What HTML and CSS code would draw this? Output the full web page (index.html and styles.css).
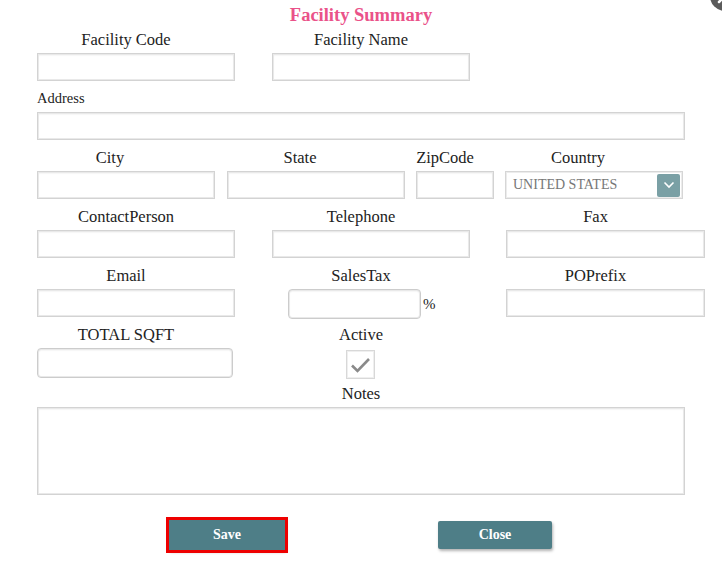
FILE: index.html
```html
<!DOCTYPE html>
<html>
<head>
<meta charset="utf-8">
<link rel="stylesheet" href="styles.css">
</head>
<body>
<div class="dialog">
  <span class="close-x" aria-hidden="true"><svg width="30" height="30" viewBox="0 0 30 30"><circle cx="15" cy="15" r="15" fill="#5b5b5b"/><path d="M9 21 L21 9 M9 9 L21 21" stroke="#fff" stroke-width="2.5" stroke-linecap="round"/></svg></span>
  <h1 class="title">Facility Summary</h1>
  <div class="form">
    <div class="row grid3 first">
      <div class="field"><label class="lbl">Facility Code</label><input class="inp" type="text"></div>
      <div class="field"><label class="lbl">Facility Name</label><input class="inp" type="text"></div>
    </div>
    <div class="row">
      <label class="lbl-small">Address</label>
      <input class="inp wide addr" type="text">
    </div>
    <div class="row row4">
      <div class="field w178"><label class="lbl shift16">City</label><input class="inp" type="text"></div>
      <div class="field w178"><label class="lbl shift16">State</label><input class="inp" type="text"></div>
      <div class="field w78"><label class="lbl">ZipCode</label><input class="inp" type="text"></div>
      <div class="field w178"><label class="lbl shift16">Country</label>
        <div class="select"><span class="sel-text">UNITED STATES</span><span class="sel-btn"><svg width="12" height="8" viewBox="0 0 12 8"><path d="M1.5 1.5 L6 6 L10.5 1.5" fill="none" stroke="#fff" stroke-width="1.6"/></svg></span></div>
      </div>
    </div>
    <div class="row grid3">
      <div class="field"><label class="lbl">ContactPerson</label><input class="inp" type="text"></div>
      <div class="field"><label class="lbl">Telephone</label><input class="inp" type="text"></div>
      <div class="field"><label class="lbl">Fax</label><input class="inp" type="text"></div>
    </div>
    <div class="row grid3">
      <div class="field"><label class="lbl">Email</label><input class="inp" type="text"></div>
      <div class="field"><label class="lbl">SalesTax</label><div class="tax"><input class="inp round tax-inp" type="text"><span class="pct">%</span></div></div>
      <div class="field"><label class="lbl">POPrefix</label><input class="inp" type="text"></div>
    </div>
    <div class="row grid3 row6">
      <div class="field"><label class="lbl">TOTAL SQFT</label><input class="inp round sqft" type="text"></div>
      <div class="field"><label class="lbl">Active</label>
        <span class="check"><svg width="21" height="16" viewBox="0 0 21 16"><path d="M2 8.5 L7.5 14 L19 2" fill="none" stroke="#8a8a8a" stroke-width="2.6"/></svg></span>
      </div>
    </div>
    <div class="row notes-row">
      <label class="lbl notes-lbl">Notes</label>
      <textarea class="inp wide notes"></textarea>
    </div>
    <div class="buttons">
      <button class="btn save">Save</button>
      <button class="btn closebtn">Close</button>
    </div>
  </div>
</div>
</body>
</html>
```

FILE: styles.css
```css
* { box-sizing: border-box; }
html, body { margin: 0; padding: 0; background: #fff; }
body {
  font-family: "Liberation Serif", "Times New Roman", serif;
  color: #222;
  overflow: hidden;
  width: 722px;
  height: 583px;
}
.dialog { position: relative; width: 722px; height: 583px; }
.close-x { position: absolute; right: -18px; top: -19px; width: 30px; height: 30px; }
.title {
  margin: 0;
  padding-top: 5px;
  height: 25px;
  line-height: 20px;
  font-size: 18.5px;
  font-weight: bold;
  color: #ea5289;
  text-align: center;
}
.form { padding-left: 37px; }
.row { margin-top: 9px; }
.first { margin-top: 6px; }
.grid3 { display: grid; grid-template-columns: 198px 198px 198px; column-gap: 37px; }
.grid3 > .field:nth-child(3) { margin-left: -1px; }
.field { display: flex; flex-direction: column; }
.lbl {
  display: block;
  height: 18px;
  line-height: 18px;
  font-family: "Liberation Serif", "Times New Roman", serif;
  font-size: 16.5px;
  text-align: center;
  margin: 0 0 4px -20px;
  white-space: nowrap;
}
.shift16 { margin-left: -32px; }
.lbl-small { display: block; height: 16px; line-height: 16px; font-size: 14.5px; margin-bottom: 6px; }
.inp {
  display: block;
  height: 28px;
  width: 100%;
  border: 1px solid #d3d3d3;
  box-shadow: inset 0 0 0 1px #e9e9e9, inset 0 1px 2px rgba(0,0,0,0.12);
  background: #fff;
  font-family: inherit;
  padding: 0 6px;
  margin: 0;
  outline: none;
}
.wide { width: 648px; }
.row4 { display: flex; }
.w178 { width: 178px; }
.w78 { width: 78px; }
.row4 > .field:nth-child(2) { margin-left: 12px; }
.row4 > .field:nth-child(3) { margin-left: 11px; }
.row4 > .field:nth-child(4) { margin-left: 11px; }
.select {
  display: flex;
  align-items: center;
  justify-content: space-between;
  height: 28px;
  border: 1px solid #d6d6d6;
  box-shadow: inset 0 0 0 1px #ececec;
  padding: 0 2px 0 7px;
}
.sel-text { font-size: 14px; color: #777; }
.sel-btn {
  width: 23px; height: 23px;
  background: #7aa0a5;
  border-radius: 2px;
  display: flex; align-items: center; justify-content: center;
}
.tax { display: flex; align-items: center; margin-left: 16px; }
.round { border-radius: 4px; border-color: #cccccc; }
.tax-inp { width: 133px; height: 30px; }
.pct { font-size: 15px; line-height: 18px; margin-left: 2px; }
.row6 { margin-top: 7px; }
.sqft { width: 196px; height: 30px; }
.check {
  display: flex; align-items: center; justify-content: center;
  width: 29px; height: 29px;
  margin: 2px 0 0 74px;
  border: 1px solid #d8d8d8;
  box-shadow: inset 0 0 0 1px #efefef;
}
.notes-row { margin-top: 6px; }
.notes-lbl { width: 648px; margin-left: 0; }
.notes { height: 88px; resize: none; }
.buttons { position: relative; height: 40px; margin-top: 25px; }
.btn {
  position: absolute;
  top: 0;
  height: 30px;
  border: none;
  border-radius: 2px;
  background: #4e7e87;
  color: #fff;
  font-family: "Liberation Serif", "Times New Roman", serif;
  font-weight: bold;
  font-size: 14px;
  box-shadow: 1px 2px 3px rgba(0,0,0,0.3);
  padding: 0;
}
.save { left: 132px; width: 116px; border-radius: 0; outline: 3px solid #ee0000; outline-offset: 0; }
.closebtn { left: 401px; width: 114px; top: 1px; height: 28px; }
```
